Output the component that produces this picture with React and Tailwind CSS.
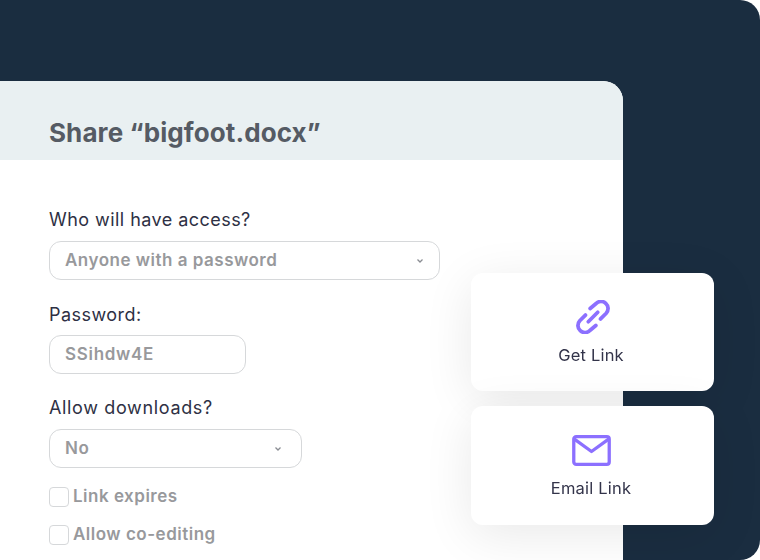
import React from 'react';

function Chevron() {
  return (
    <svg width="8" height="6" viewBox="0 0 8 6" className="text-[#8a8d93]">
      <path d="M1.5 1.5 L4 4 L6.5 1.5" fill="none" stroke="currentColor" strokeWidth="1.3" />
    </svg>
  );
}

function Select({ value, width, padding }) {
  return (
    <div className={`flex items-center justify-between h-[39px] pl-[15px] rounded-[12px] border border-[#d6d8da] bg-white ${width} ${padding}`}>
      <span className="text-[17px] font-semibold text-[#98999c] tracking-[0.5px]">{value}</span>
      <Chevron />
    </div>
  );
}

function Check({ label }) {
  return (
    <div className="flex items-center gap-[4px] h-5">
      <div className="w-5 h-5 rounded-[4px] border border-[#d6d8da] bg-white" />
      <span className="text-[17px] font-semibold text-[#98999c] tracking-[0.5px]">{label}</span>
    </div>
  );
}

function ActionCard({ icon, label, height }) {
  return (
    <div className={`flex flex-col items-center pr-[3px] rounded-[12px] bg-white shadow-[0_10px_50px_rgba(0,0,0,0.09)] ${height}`}>
      <div className="h-[34px] mt-[27px] flex items-center justify-center">{icon}</div>
      <div className="mt-[9px] text-[16.5px] tracking-[0.2px] text-[#33344a]">{label}</div>
    </div>
  );
}

export default function App() {
  return (
    <div className="relative w-[760px] h-[560px] overflow-hidden bg-[#1a2d40] rounded-tr-[20px] rounded-br-[20px] font-['Inter','Noto_Sans',sans-serif] blur-[0.4px]">
      <div className="absolute inset-0 pt-[81px]">
        <div className="w-[623px] h-[479px] rounded-tr-[20px] bg-white overflow-hidden">
          <div className="h-[79px] pl-[49px] pt-[32px] bg-[#e9f0f2]">
            <h1 className="text-[26px] leading-[40px] font-bold tracking-[0.1px] text-[#555b64]">Share “bigfoot.docx”</h1>
          </div>
          <div className="pl-[49px] pt-[48px]">
            <div className="text-[18px] leading-6 tracking-[0.45px] text-[#2e3044] mb-[9px]">Who will have access?</div>
            <Select value="Anyone with a password" width="w-[391px]" padding="pr-[15px]" />
            <div className="text-[18px] leading-6 tracking-[0.45px] text-[#2e3044] mt-[23px] mb-[8px]">Password:</div>
            <div className="flex items-center h-[39px] w-[197px] pl-[15px] rounded-[12px] border border-[#d6d8da] text-[17px] font-semibold text-[#98999c] tracking-[0.7px]">SSihdw4E</div>
            <div className="text-[18px] leading-6 tracking-[0.65px] text-[#2e3044] mt-[22px] mb-[9px]">Allow downloads?</div>
            <Select value="No" width="w-[253px]" padding="pr-[19px]" />
            <div className="mt-[19px] flex flex-col gap-[18px]">
              <Check label="Link expires" />
              <Check label="Allow co-editing" />
            </div>
          </div>
        </div>
      </div>
      <div className="absolute left-[471px] top-[273px] w-[243px] flex flex-col gap-[15px]">
        <ActionCard
          height="h-[118px]"
          label="Get Link"
          icon={
            <svg width="34" height="34" viewBox="0 0 36 36" fill="none" stroke="#8c70ff" strokeWidth="4" strokeLinecap="round" strokeLinejoin="round" className="relative left-[2px]">
              <path d="M15 9 L21 4 A6.5 6.5 0 0 1 32 14 L26 20" />
              <path d="M21 27 L15 32 A6.5 6.5 0 0 1 4 22 L10 16" />
              <line x1="13" y1="23" x2="23" y2="13" />
            </svg>
          }
        />
        <ActionCard
          height="h-[119px]"
          label="Email Link"
          icon={
            <svg width="39" height="31" viewBox="0 0 40 32" fill="none" stroke="#8c70ff" strokeWidth="3.4" strokeLinejoin="round">
              <rect x="1.7" y="1.7" width="36.6" height="28.6" rx="2.5" />
              <path d="M2 4 L20 17 L38 4" />
            </svg>
          }
        />
      </div>
    </div>
  );
}
